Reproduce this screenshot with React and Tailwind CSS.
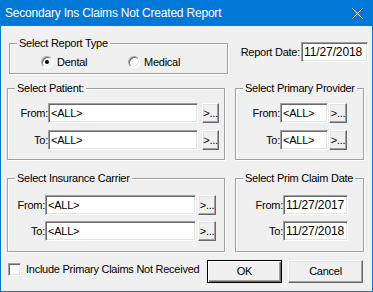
import React from "react";

function Group({ label, className = "", children }) {
  return (
    <div
      className={
        "relative border border-[#a0a0a0] shadow-[inset_1px_1px_0_#ffffff,1px_1px_0_#ffffff] " +
        className
      }
    >
      <span className="absolute left-[7px] top-[-7px] bg-[#f0f0f0] px-[2px] leading-[13px] whitespace-nowrap">
        {label}
      </span>
      {children}
    </div>
  );
}

function TextBox({ className = "", children }) {
  return (
    <div
      className={
        "h-[20px] bg-white border border-[#a0a0a0] border-r-white border-b-white shadow-[inset_1px_1px_0_#696969,inset_-1px_-1px_0_#e3e3e3] pl-[2px] flex items-center leading-none whitespace-nowrap overflow-hidden " +
        className
      }
    >
      {children}
    </div>
  );
}

function DotsButton({ className = "" }) {
  return (
    <div
      className={
        "h-[20px] bg-[#f0f0f0] border border-white border-r-[#696969] border-b-[#696969] shadow-[inset_-1px_-1px_0_#a0a0a0,inset_1px_1px_0_#e3e3e3] flex items-center justify-center leading-none " +
        className
      }
    >
      &gt;...
    </div>
  );
}

function Radio({ checked }) {
  return (
    <div className="relative w-[12px] h-[12px] rounded-full bg-white border border-[#a0a0a0] border-r-white border-b-white shadow-[inset_1px_1px_0_#696969,inset_-1px_-1px_0_#e3e3e3] flex items-center justify-center">
      {checked && <div className="w-[4px] h-[4px] rounded-full bg-black" />}
    </div>
  );
}

function Row({ label, labelW, children }) {
  return (
    <div className="flex items-center">
      <div className={"text-right " + labelW}>{label}</div>
      {children}
    </div>
  );
}

export default function App() {
  return (
    <div className="w-[373px] h-[292px] bg-[#0078d7] flex flex-col font-['Liberation_Sans',Arial,sans-serif] text-[11px] tracking-[-0.25px] text-black">
      {/* Title bar */}
      <div className="h-[26px] flex items-center pl-[5px] pr-[10px] text-white">
        <span className="text-[12px] tracking-[-0.2px] leading-none">
          Secondary Ins Claims Not Created Report
        </span>
        <svg className="ml-auto" width="11" height="11" viewBox="0 0 11 11">
          <path d="M0.5 0.5 L10.5 10.5 M10.5 0.5 L0.5 10.5" stroke="#ffffff" strokeWidth="1" fill="none" />
        </svg>
      </div>

      {/* Body */}
      <div className="flex-1 mx-[1px] mb-[1px] bg-[#f0f0f0] flex flex-col">
        {/* Row 1 */}
        <div className="flex items-start mt-[16px]">
          <Group label="Select Report Type" className="ml-[8px] mt-[1px] w-[219px] h-[31px]">
            <div className="flex items-center pt-[12px] pl-[31px]">
              <div className="flex items-center w-[87px]">
                <Radio checked />
                <span className="ml-[4px] leading-none">Dental</span>
              </div>
              <div className="flex items-center">
                <Radio />
                <span className="ml-[4px] leading-none">Medical</span>
              </div>
            </div>
          </Group>
          <div className="ml-auto mr-[4px] flex items-center">
            <span className="mr-[1px]">Report Date:</span>
            <TextBox className="w-[67px] h-[19px] text-[12px] tracking-[-0.1px]">11/27/2018</TextBox>
          </div>
        </div>

        {/* Row 2 */}
        <div className="flex items-start mt-[14px]">
          <Group label="Select Patient:" className="ml-[6px] w-[218px] h-[72px]">
            <div className="flex flex-col gap-[7px] pt-[14px]">
              <Row label="From:" labelW="w-[40px]">
                <TextBox className="w-[150px]">&lt;ALL&gt;</TextBox>
                <DotsButton className="ml-[4px] w-[17px]" />
              </Row>
              <Row label="To:" labelW="w-[40px]">
                <TextBox className="w-[150px]">&lt;ALL&gt;</TextBox>
                <DotsButton className="ml-[4px] w-[17px]" />
              </Row>
            </div>
          </Group>
          <Group label="Select Primary Provider" className="ml-[10px] w-[129px] h-[72px]">
            <div className="flex flex-col gap-[7px] pt-[14px]">
              <Row label="From:" labelW="w-[44px]">
                <TextBox className="w-[48px]">&lt;ALL&gt;</TextBox>
                <DotsButton className="ml-[1px] w-[18px]" />
              </Row>
              <Row label="To:" labelW="w-[44px]">
                <TextBox className="w-[48px]">&lt;ALL&gt;</TextBox>
                <DotsButton className="ml-[1px] w-[18px]" />
              </Row>
            </div>
          </Group>
        </div>

        {/* Row 3 */}
        <div className="flex items-start mt-[18px]">
          <Group label="Select Insurance Carrier" className="ml-[6px] w-[218px] h-[74px]">
            <div className="flex flex-col gap-[6px] pt-[16px]">
              <Row label="From:" labelW="w-[37px]">
                <TextBox className="w-[151px]">&lt;ALL&gt;</TextBox>
                <DotsButton className="ml-[2px] w-[18px]" />
              </Row>
              <Row label="To:" labelW="w-[37px]">
                <TextBox className="w-[151px]">&lt;ALL&gt;</TextBox>
                <DotsButton className="ml-[2px] w-[18px]" />
              </Row>
            </div>
          </Group>
          <Group label="Select Prim Claim Date" className="ml-[10px] w-[129px] h-[74px]">
            <div className="flex flex-col gap-[6px] pt-[16px]">
              <Row label="From:" labelW="w-[47px]">
                <TextBox className="w-[65px] text-[12px] tracking-[-0.1px]">11/27/2017</TextBox>
              </Row>
              <Row label="To:" labelW="w-[47px]">
                <TextBox className="w-[65px] text-[12px] tracking-[-0.1px]">11/27/2018</TextBox>
              </Row>
            </div>
          </Group>
        </div>

        {/* Row 4 */}
        <div className="flex items-start mt-[8px]">
          <div className="flex items-center ml-[7px] mt-[3px] h-[13px]">
            <div className="w-[13px] h-[13px] bg-white border border-[#a0a0a0] border-r-white border-b-white shadow-[inset_1px_1px_0_#696969,inset_-1px_-1px_0_#e3e3e3]" />
            <span className="ml-[5px] leading-none whitespace-nowrap">Include Primary Claims Not Received</span>
          </div>
          <div className="ml-auto w-[75px] h-[23px] bg-[#f0f0f0] border border-black shadow-[inset_1px_1px_0_#ffffff,inset_-1px_-1px_0_#696969,inset_-2px_-2px_0_#a0a0a0] flex items-center justify-center leading-none">
            OK
          </div>
          <div className="ml-[6px] mr-[9px] w-[75px] h-[23px] bg-[#f0f0f0] border border-white border-r-[#696969] border-b-[#696969] shadow-[inset_-1px_-1px_0_#a0a0a0,inset_1px_1px_0_#e3e3e3] flex items-center justify-center leading-none">
            Cancel
          </div>
        </div>
      </div>
    </div>
  );
}
